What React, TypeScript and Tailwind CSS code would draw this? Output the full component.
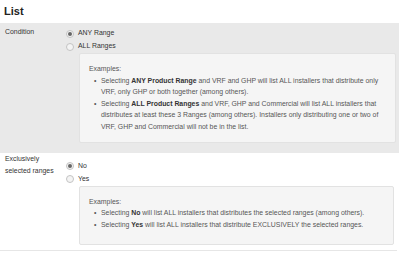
import React from 'react';

const Radio: React.FC<{ checked?: boolean; label: string }> = ({ checked, label }) => (
  <div className="flex items-center h-[13px]">
    <span className="w-[8px] h-[8px] rounded-full border border-[#c4c4c4] bg-[#f4f4f4] flex items-center justify-center">
      {checked && <span className="w-[4px] h-[4px] rounded-full bg-[#666]" />}
    </span>
    <span className="ml-[4px] text-[#333]">{label}</span>
  </div>
);

const Examples: React.FC<{ items: React.ReactNode[]; className?: string }> = ({ items, className }) => (
  <div className={`ml-[13px] mr-[3px] border border-[#e2e2e2] rounded-[2px] bg-[#f5f5f5] pl-[9px] pr-[6px] text-[#555] leading-[11.6px] ${className ?? ''}`}>
    <div>Examples:</div>
    <ul className="pl-[12px]">
      {items.map((item, i) => (
        <li key={i} className="relative">
          <span className="absolute left-[-7px] top-0">•</span>
          {item}
        </li>
      ))}
    </ul>
  </div>
);

const App: React.FC = () => {
  return (
    <div className="w-[400px] h-[253px] bg-white text-[6.9px] overflow-hidden" style={{ fontFamily: '"Liberation Sans", Arial, sans-serif' }}>
      <h1 className="text-[11px] font-bold text-[#222] px-[4px] pt-[4px] h-[23px] leading-[14px]">List</h1>

      <div className="w-[399px] bg-[#e9e9e9] flex pb-[10px]">
        <div className="w-[66px] pl-[5px] pt-[3px] text-[#333] leading-[12px]">Condition</div>
        <div className="flex-1">
          <div className="pt-[4px]">
            <Radio checked label="ANY Range" />
            <Radio label="ALL Ranges" />
          </div>
          <Examples
            className="pt-[9px] pb-[9px]"
            items={[
              <>Selecting <b className="text-[#333]">ANY Product Range</b> and VRF and GHP will list ALL installers that distribute only VRF, only GHP or both together (among others).</>,
              <>Selecting <b className="text-[#333]">ALL Product Ranges</b> and VRF, GHP and Commercial will list ALL installers that distributes at least these 3 Ranges (among others). Installers only distributing one or two of VRF, GHP and Commercial will not be in the list.</>,
            ]}
          />
        </div>
      </div>

      <div className="w-[397px] flex border-b border-[#e6e6e6] pb-[5px]">
        <div className="w-[66px] pl-[5px] pt-[0px] text-[#333] leading-[12px]">Exclusively<br />selected ranges</div>
        <div className="flex-1">
          <div className="pt-[7px]">
            <Radio checked label="No" />
            <Radio label="Yes" />
          </div>
          <Examples
            className="pt-[9px] pb-[14px]"
            items={[
              <>Selecting <b className="text-[#333]">No</b> will list ALL installers that distributes the selected ranges (among others).</>,
              <>Selecting <b className="text-[#333]">Yes</b> will list ALL installers that distribute EXCLUSIVELY the selected ranges.</>,
            ]}
          />
        </div>
      </div>
    </div>
  );
};

export default App;
